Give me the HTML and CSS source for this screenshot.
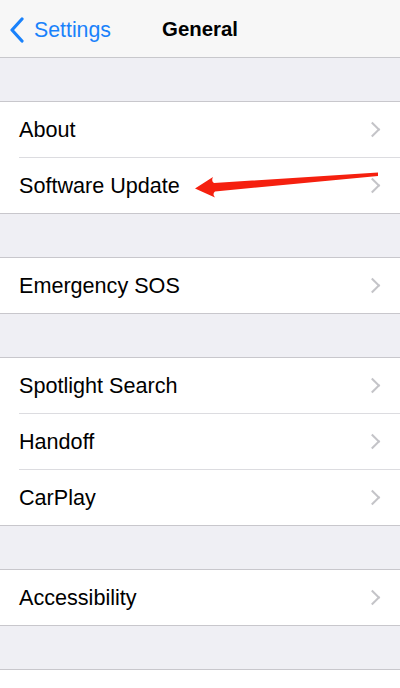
FILE: index.html
```html
<!DOCTYPE html>
<html lang="en">

<head>
    <meta charset="UTF-8">
    <meta name="viewport" content="width=device-width, initial-scale=1.0">
    <title>General</title>
    <link rel="stylesheet" href="styles.css">
</head>

<body>
    <div class="nav">
        <a class="nav-back" href="#">
            <svg class="nav-chevron" width="16" height="26" viewBox="0 0 16 26">
                <path d="M13 2 L3 13 L13 24" fill="none" stroke="#1a82fb" stroke-width="3.2" stroke-linecap="round" stroke-linejoin="round"/>
            </svg>
            <span>Settings</span>
        </a>
        <div class="nav-title">General</div>
    </div>

    <div class="list">
        <ul class="group">
            <li><span>About</span><i class="chev"></i></li>
            <li><span>Software Update</span><i class="chev"></i></li>
        </ul>
        <ul class="group">
            <li><span>Emergency SOS</span><i class="chev"></i></li>
        </ul>
        <ul class="group">
            <li><span>Spotlight Search</span><i class="chev"></i></li>
            <li><span>Handoff</span><i class="chev"></i></li>
            <li><span>CarPlay</span><i class="chev"></i></li>
        </ul>
        <ul class="group">
            <li><span>Accessibility</span><i class="chev"></i></li>
        </ul>
        <ul class="group group-last">
            <li><span></span></li>
        </ul>
    </div>

    <!-- red arrow drawn over the list -->
    <svg class="arrow" width="400" height="688" viewBox="0 0 400 688">
        <path d="M195 188.5 L213 177 Q211 181 214 183 L378 172.5 L378 176 L215 191.5 Q212 194 215 197.5 Z" fill="#f5200f"/>
    </svg>
</body>

</html>
```

FILE: styles.css
```css
* {
    padding: 0;
    margin: 0;
    list-style: none;
    box-sizing: border-box;
}

html,
body {
    overflow: hidden;
}

body {
    width: 400px;
    height: 688px;
    background: #efeff4;
    font-family: "Liberation Sans", Arial, sans-serif;
    color: #000;
}

.nav {
    position: relative;
    height: 58px;
    background: #f7f7f7;
    border-bottom: 1px solid #c8c8cc;
    display: flex;
    align-items: center;
    justify-content: center;
}

.nav-back {
    position: absolute;
    left: 9px;
    top: 17px;
    display: flex;
    align-items: center;
    gap: 9px;
    color: #1a82fb;
    text-decoration: none;
    font-size: 21.3px;
}

.nav-chevron {
    display: block;
}

.nav-title {
    font-size: 20.4px;
    font-weight: bold;
    padding-top: 2px;
}

.group {
    margin-top: 43px;
    background: #fff;
    border-top: 1px solid #c8c7cc;
    border-bottom: 1px solid #c8c7cc;
    padding-left: 19px;
}

.group li {
    height: 56px;
    display: flex;
    align-items: center;
    justify-content: space-between;
    padding-right: 20px;
    border-bottom: 1px solid #dcdce0;
    font-size: 21.6px;
}

.group li:last-child {
    height: 55px;
    border-bottom: none;
}

.group-last {
    border-bottom: none;
}

.group-last li:last-child {
    height: 40px;
}

.chev {
    width: 11px;
    height: 11px;
    border-top: 2px solid #c4c4c8;
    border-right: 2px solid #c4c4c8;
    transform: rotate(45deg);
    margin-right: 2px;
}

.arrow {
    position: absolute;
    left: 0;
    top: 0;
    pointer-events: none;
}
```
